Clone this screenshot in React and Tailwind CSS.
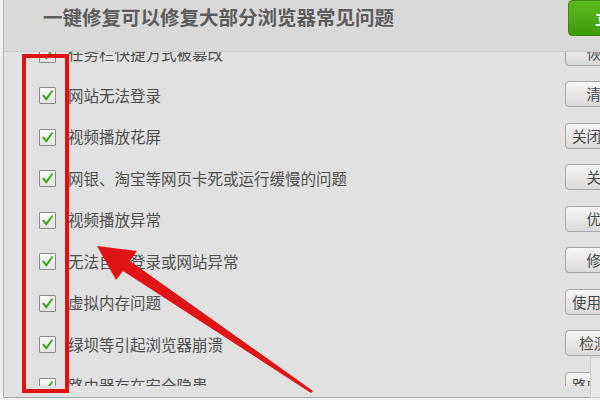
import React from "react";

const rows = [
  { text: "任务栏快捷方式被篡改", btn: "恢复" },
  { text: "网站无法登录", btn: "清理" },
  { text: "视频播放花屏", btn: "关闭加速" },
  { text: "网银、淘宝等网页卡死或运行缓慢的问题", btn: "关闭" },
  { text: "视频播放异常", btn: "优化" },
  { text: "无法自动登录或网站异常", btn: "修复" },
  { text: "虚拟内存问题", btn: "使用默认" },
  { text: "绿坝等引起浏览器崩溃", btn: "检测器" },
  { text: "路由器存在安全隐患", btn: "路由修复" },
];

const font = { fontFamily: '"Noto Sans CJK SC", "Noto Sans", sans-serif' };

function Check() {
  return (
    <div className="w-[17px] h-[17px] shrink-0 border border-[#8a8a8a] rounded-[1px] bg-gradient-to-b from-[#fbfbfb] to-[#e2e2e2] flex items-center justify-center">
      <svg width="15" height="15" viewBox="0 0 14 14">
        <path d="M2 7.2 L3.6 6 L5.8 8.8 L11.2 1.8 L12.4 2.8 L6 12 Z" fill="#35a80f" />
      </svg>
    </div>
  );
}

export default function App() {
  return (
    <div className="relative w-[600px] h-[400px] overflow-hidden bg-[#f0f0f0]" style={font}>
      <div className="flex flex-col h-[398px] border-b border-[#a3a9b0] ml-[3px] border-l border-l-[#b4b4b4] bg-[#e1e1e1]">
        <div className="relative z-10 flex h-[52px] shrink-0 bg-[#d9d9d9] border-b border-[#cdcdcd]">
          <div className="flex-1 pl-[39px] pt-[4px] text-[19.5px] font-bold text-[#5c5c5c] leading-[26px]">
            一键修复可以修复大部分浏览器常见问题
          </div>
          <div className="w-[100px] h-[36px] mr-[-68px] ml-[-4px] rounded-[4px] bg-gradient-to-b from-[#5cbb20] to-[#3e9c0c] border border-[#3a8a10] text-white text-[16px] font-bold flex items-center pl-[26px]">
            立即修复
          </div>
        </div>
        <div className="flex-1 overflow-hidden mb-[11px]">
          <div className="mt-[-18.75px]">
            {rows.map((r, i) => (
              <div key={i} className="flex items-center h-[41.5px]">
                <div className="pl-[35px]">
                  <Check />
                </div>
                <div className="ml-[12px] flex-1 text-[15.5px] text-[#4e4e4e] whitespace-nowrap">
                  {r.text}
                </div>
                <div className="w-[72px] h-[26px] mt-[-3px] mr-[-37px] shrink-0 rounded-[4px] border border-[#a6a6a6] bg-gradient-to-b from-[#f6f6f6] to-[#dadada] flex items-center justify-center text-[14.5px] text-[#4a4a4a] whitespace-nowrap">
                  {r.btn}
                </div>
              </div>
            ))}
          </div>
        </div>
      </div>

      <div className="absolute left-[590px] top-[357px] w-[12px] h-[41px] bg-[#e9e9e9] border border-[#cdcdcd]" />

      <div className="absolute left-[22px] top-[54px] w-[47px] h-[339px] border-[4.5px] border-[#df1212]" />

      <svg className="absolute left-0 top-0" width="600" height="400" viewBox="0 0 600 400">
        <polygon
          points="97,246 137,251 130,261 313,391 311,393 123,271 116,280"
          fill="#e01414"
        />
      </svg>
    </div>
  );
}
